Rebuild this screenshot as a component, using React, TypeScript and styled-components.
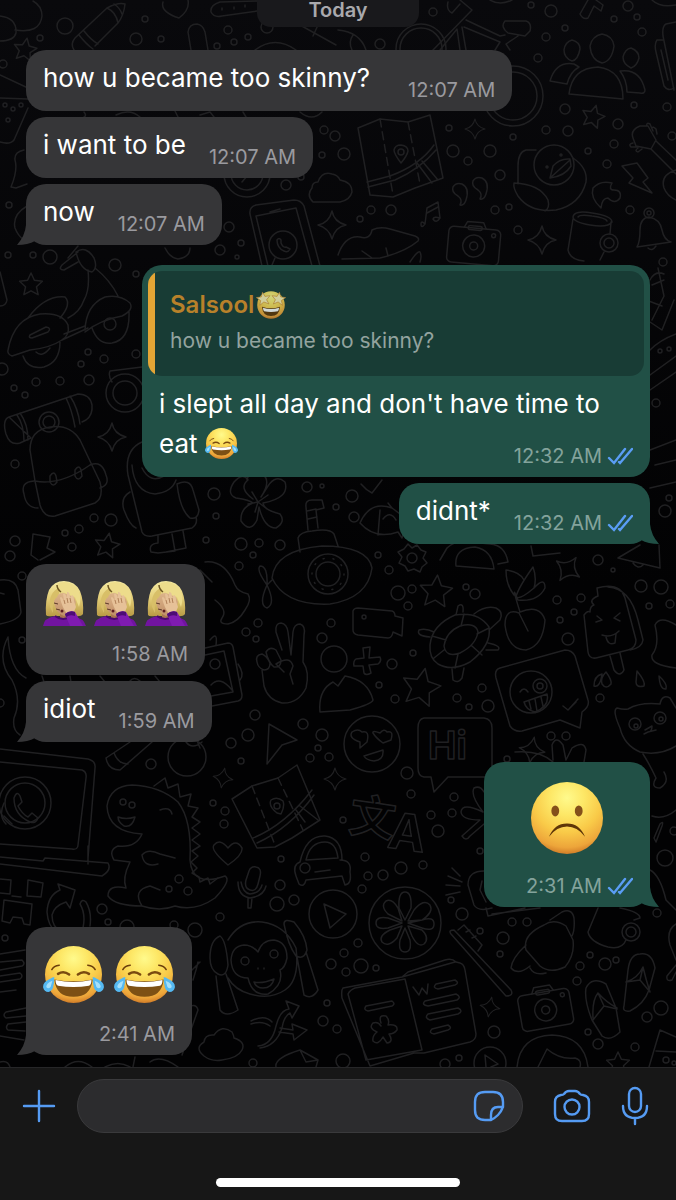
import React, { useId } from 'react';
import styled, { createGlobalStyle, css } from 'styled-components';

const GlobalStyle = createGlobalStyle`
  *, *::before, *::after { box-sizing: border-box; }
  body {
    margin: 0;
    background: #171717;
    font-family: Inter, "Liberation Sans", "Noto Sans CJK SC", sans-serif;
  }
`;

/* ---------- wallpaper ---------- */

const dots: number[][] = [
  [65,26,8],[145,19,3],[136,39,6],[161,39,3],[40,38,3],[228,30,4],[248,37,3],[234,42,3],[217,46,3],[3,64,4],[5,105,2],[13,109,2],
  [21,105,2],[8,120,2],[324,130,4],[335,136,5],[322,155,3],[286,185,5],[301,177,3],[9,205,3],[229,227,5],[220,250,5],[241,243,3],
  [8,255,3],[33,255,3],[50,257,7],[237,257,2],[267,27,6],[433,12,4],[380,44,5],[551,11,6],[531,5,3],[565,28,3],[546,37,4],
  [538,58,4],[628,6,5],[614,19,3],[637,17,3],[642,32,4],[565,109,5],[634,105,3],[667,107,4],[618,124,5],[546,130,4],[568,131,5],
  [513,137,3],[449,128,3],[453,151,6],[490,151,6],[468,161,4],[500,175,5],[344,154,6],[614,144,4],[588,151,3],[607,164,4],
  [630,210,4],[495,210,4],[509,207,3],[391,210,5],[371,210,4],[360,219,3],[518,230,4],[672,136,4],[115,265,6],[136,274,3],
  [88,352,3],[104,359,4],[136,354,4],[81,364,3],[60,381,4],[36,382,4],[89,380,5],[14,388,3],[25,395,3],[2,369,6],[15,464,4],
  [214,494,6],[216,516,3],[307,487,5],[322,486,2],[94,518,4],[111,520,6],[79,529,4],[65,533,3],[72,547,4],[15,541,5],[10,556,5],
  [206,540,3],[241,544,6],[259,543,4],[280,545,5],[253,555,3],[336,507,3],[663,262,4],[660,351,2],[669,349,2],[656,403,4],
  [352,496,6],[354,517,5],[669,498,3],[665,511,6],[378,555,3],[239,566,4],[22,576,4],[246,632,4],[258,623,4],[256,639,3],
  [322,638,5],[331,623,4],[22,640,3],[255,715,5],[248,735,6],[231,743,5],[241,761,3],[303,724,5],[322,735,6],[318,748,3],
  [310,758,4],[329,757,4],[151,764,5],[213,803,3],[225,811,4],[224,824,4],[0,703,4],[389,570,4],[398,593,7],[412,589,4],
  [408,606,4],[466,587,3],[475,594,5],[557,600,4],[581,598,4],[574,612,3],[560,620,3],[568,639,6],[413,653,3],[392,664,5],
  [379,685,3],[395,699,4],[482,688,4],[457,698,4],[469,707,3],[488,706,6],[598,560,5],[613,570,2],[641,586,6],[661,587,7],
  [649,606,3],[670,604,4],[600,698,4],[551,736,4],[566,736,4],[507,759,3],[407,773,6],[411,794,4],[454,797,4],[452,813,4],
  [431,815,4],[438,831,6],[343,820,3],[365,857,4],[368,876,4],[383,875,5],[401,868,6],[423,865,4],[362,889,4],[480,851,3],
  [451,900,3],[462,914,6],[665,858,8],[674,831,4],[102,909,5],[108,922,3],[127,927,7],[174,925,4],[195,930,7],[220,917,4],
  [277,904,7],[294,900,5],[280,885,5],[281,859,3],[5,938,3],[331,964,5],[327,1003,3],[323,1021,5],[337,1029,4],[253,1063,4],
  [179,879,4],[169,889,3],[188,891,4],[512,922,4],[527,922,4],[503,938,6],[500,954,3],[480,931,3],[590,955,3],[605,964,6],
  [616,960,3],[580,966,4],[577,981,4],[657,913,4],[358,943,4],[344,953,4],[361,966,7],[376,968,3],[346,972,4],[494,1032,6],
  [588,1032,3],[598,1044,5],[647,1017,5],[661,1008,7],[635,1047,4],[445,1064,5],[459,1058,3],[343,1061,7],
  // wheels, lenses, faces
  [421,49,25],[421,49,21],[513,96,30],[513,96,24],[401,152,3],[554,165,20],[561,155,1],[547,167,1],[609,243,9],[609,243,5],
  [649,213,5],[649,213,2],[283,245,14],[247,174,23],[247,174,16],[110,324,6],[125,393,19],[125,393,12],[49,422,10],[49,422,6],
  [328,574,20],[328,574,12],[334,659,13],[364,617,2],[531,692,21],[540,686,7],[540,686,3],[372,744,28],[635,724,6],[660,718,6],
  [636,726,2],[661,719,2],[25,803,26],[25,803,20],[123,802,3],[132,805,3],[187,757,19],[277,806,3],[305,868,5],[405,923,36],
  [333,914,24],[245,961,4],[274,954,4],[490,1063,16],[631,932,9],[631,932,5],[412,558,5],[215,664,5],[666,1060,3],[674,1063,2],
];

const sparkles: number[][] = [
  [475,129,10,0],[542,240,14,0],[112,437,14,0],[332,225,14,0],[223,778,10,10],[335,779,11,0],[568,569,14,35],[532,750,13,10],[490,1007,10,10],
];

const stars: number[][] = [
  [25,50,12,10],[31,285,12,0],[593,117,12,15],[107,546,13,10],[436,592,17,5],[421,688,20,12],[618,1064,12,0],
];

const doodles: string[] = [
  // clouds and pencil
  'M15 30Q40 34 42 16Q42 6 33 1M0 16Q17 18 16 33Q14 41 0 41',
  'M75 38L107 8Q118 2 125 4Q124 15 118 23L95 46M107 8Q116 12 118 23M79 35Q86 44 93 49M84 31Q91 40 98 44M75 38Q70 44 74 50M114 4Q120 8 122 14',
  'M163 2Q160 12 179 18Q190 10 188 0',
  'M257 1L220 2Q210 5 211 12Q214 18 222 16L257 11M222 8v2M234 7v2M245 5v2',
  'M191 50L188 32Q189 24 197 24Q203 25 205 32L208 50M255 50Q275 35 296 50',
  'M338 30Q360 32 366 50M353 35Q348 42 352 50M300 25L336 45M318 25L313 36',
  // bicycle
  'M433 50L472 10L460 0M440 50L457 29L460 50M462 27L466 50M466 20L500 36L505 35M464 27L500 42L495 50M448 2Q446 10 452 13L460 4M505 21L526 21Q532 23 530 31L525 36L508 33Q500 27 505 21ZM510 50L506 44L518 36',
  // group of people
  'M572 40Q580 42 580 49Q578 60 572 61Q564 58 564 50Q565 42 572 40ZM602 34Q613 36 614 46Q612 61 602 63Q591 60 590 46Q592 36 602 34ZM631 48Q639 51 639 58Q637 66 631 68Q623 64 623 57Q625 49 631 48Z',
  'M550 81Q556 61 574 64L579 67Q570 72 567 84ZM569 94Q572 68 598 67Q623 70 623 99ZM620 71Q640 68 645 90Q645 94 640 93L627 92Q627 80 620 71Z',
  'M676 22L666 24Q662 26 663 36L674 90M663 40L657 40Q654 44 656 52L664 86Q668 92 674 88M661 50L668 80M580 14Q583 20 588 18L594 6L601 11L603 5L596 0M580 14L588 0M490 0Q500 6 512 0M652 0Q660 8 676 5',
  // quotes and notes
  'M458 196Q451 192 453 187Q456 182 462 184Q470 188 466 200Q464 206 460 205Q463 200 458 196ZM478 190Q471 186 473 181Q476 176 482 178Q490 182 486 194Q484 200 480 199Q483 194 478 190Z',
  'M425 224L427 208L438 202L440 218Q436 224 433 219Q434 216 440 218M425 224Q421 229 421 224Q421 220 425 224M427 213L438 207',
  'M338 255Q345 235 360 237Q370 240 372 230Q380 226 390 229L415 236Q420 238 418 241Q405 252 380 258L342 259M362 251L372 258M386 248L388 256M410 262Q418 250 420 252Q422 256 420 262',
  // duck
  'M536 150L526 150Q518 152 518 166L518 184M573 158Q588 168 586 182Q580 205 556 210Q530 213 518 196Q513 188 514 183Q540 184 548 200Q550 208 545 211M570 159Q560 158 553 166L550 178Q565 176 571 166ZM550 178L570 160',
  'M601 208Q590 198 593 188Q600 180 612 183Q608 190 614 190Q622 190 620 198Q615 205 608 198Q602 198 601 208Z',
  'M622 166L637 163L648 178L643 182L652 193L629 183L633 178Z',
  'M633 138Q630 130 640 126L648 126L656 140L651 149L636 146ZM656 141L676 160M651 149L676 174M676 170Q660 175 664 188Q667 196 676 200M647 126Q646 122 650 124L653 131M652 128Q653 126 656 129L657 134M633 143Q628 144 631 147L637 147M638 148Q634 151 638 152L642 149',
  // mug and bell
  'M573 217Q574 210 592 213Q612 216 612 222Q608 228 590 225Q573 222 573 217ZM578 217Q580 214 592 216Q606 218 607 221M573 219L568 250Q570 260 584 261M611 222L610 234M604 252L600 260',
  'M637 247Q640 242 640 230Q640 218 649 217Q660 219 662 230Q664 240 671 242ZM648 248Q652 252 656 246',
  // phone
  'M262 266L250 214Q249 207 256 205L294 200Q301 200 304 206L320 266M268 266L256 216L296 208L312 266M270 212L280 209M275 258L272 265M277 240Q279 237 281 240L281 243Q283 248 286 247L290 249Q288 253 284 251Q277 248 277 240Z',
  'M313 202Q306 195 312 188Q312 182 318 182Q322 171 332 174Q338 175 340 180Q352 182 352 192Q350 200 340 202ZM242 182L254 168',
  'M0 75L28 88M0 98L28 99M28 108L14 140Q10 145 0 142M24 150Q14 152 15 160Q18 170 11 187L16 188L27 184M27 206Q12 215 15 228Q18 236 24 240M165 248Q170 258 178 259Q190 257 190 248M68 258L78 246',
  'M84 112Q87 116 84 117M116 115Q130 108 140 117M175 111L178 117M200 115L210 112L214 117M243 112L246 117M300 112Q312 122 322 112',
  // scooter
  'M8 350Q14 318 40 314Q62 312 68 325Q70 335 62 340Q50 348 30 350L12 356Q7 354 8 350ZM28 318Q45 295 65 297Q72 304 60 318M30 335L46 327Q52 328 48 332L32 338Q28 338 30 335ZM23 356Q28 370 44 367Q60 362 60 342M36 352Q42 358 50 348M62 340L88 328M64 334L85 326',
  'M85 330Q86 305 105 297Q120 294 130 303Q134 310 122 316Q100 320 85 332M92 328Q98 345 112 343Q130 340 129 312M88 270Q90 290 84 300Q80 312 68 318M95 268Q110 280 118 296M76 252Q86 245 94 258Q98 268 92 272Q80 270 76 252M78 252L62 265Q58 270 64 270L78 262M0 272L7 300Q6 306 0 306M142 367L110 371Q108 376 112 382',
  // backpack
  'M9 417L78 394Q90 394 92 405Q93 415 86 420L82 422M31 438L20 443Q10 446 6 434Q2 420 9 417ZM17 415Q24 425 24 441M20 413Q28 424 28 440M66 398Q72 410 75 427M70 396Q78 408 80 424',
  'M35 481L30 450Q30 430 50 427Q70 424 80 440L100 482Q104 498 95 503L55 516Q44 518 40 505ZM35 481Q60 486 90 465M34 481Q20 482 24 494Q26 508 38 508M90 465Q102 460 106 475Q110 485 100 488M50 476Q54 470 56 476L57 482Q53 488 50 482ZM75 470Q79 464 81 470L82 476Q78 482 75 476Z',
  // astronaut
  'M128 475Q124 450 142 442M132 465Q134 492 155 494Q172 492 176 480M128 475L142 532Q144 537 152 536L192 528Q198 524 196 517M177 484Q190 478 193 490L199 510Q198 520 190 518Q180 510 177 484M130 492Q120 498 124 510Q130 526 136 528M158 536L158 543Q148 544 151 552L158 553L175 551L172 534M183 531L186 548L166 552M142 468Q150 484 164 476',
  // flower
  'M253 499Q238 488 248 480Q243 472 234 482Q226 494 236 498Q250 500 253 503Q240 508 241 521Q250 534 257 520L259 507Q264 528 276 528Q286 522 280 514Q264 510 263 503Q290 498 285 482Q276 474 268 486L261 497Q272 480 262 474Q250 468 247 480M258 502L252 492M258 502L268 495M258 502L267 509M258 502L255 512M258 502L248 504',
  // submarine
  'M308 530L306 507Q305 500 312 500L322 500L324 508L316 510L318 528M307 511L316 509M308 519L317 517M300 552L298 538Q300 532 312 531Q330 528 334 534L338 546M272 578Q275 550 322 546Q368 546 372 568Q368 598 330 604Q285 606 272 578ZM267 585L272 580M267 585Q256 570 260 566Q268 566 267 585M267 585Q258 605 267 608Q276 604 267 585',
  'M33 534L50 537L47 548L55 552L40 560M33 534L31 555L38 560',
  // fish, hat, bell
  'M360 523Q370 500 392 508L388 503M360 523Q375 540 398 532L402 538L408 520L392 508M383 519Q390 510 396 520M380 510L378 535M361 484Q366 490 372 493L382 480M440 560L447 548Q455 540 470 542L490 544Q505 545 508 562L498 564M456 566Q454 548 475 547Q492 550 494 569ZM531 546L533 556L560 553M618 558Q628 552 640 545M618 558L660 568L659 545M633 563Q638 570 643 565',
  'M674 300L662 330L650 322M650 350Q660 340 676 334M650 375L676 356M650 390L676 372M650 450L676 440M655 465L676 460M652 320L664 296L658 268M652 285L664 280M650 488L676 482M646 300L662 306M650 280Q655 270 664 274',
  // gear
  'M404 549L408 544L412 548L417 545L421 550L426 552L423 558L427 563L422 567L420 572L414 569L408 571L405 566L399 563L402 557L398 552Z',
  // waves and portrait
  'M205 562Q225 560 235 585Q238 592 248 594Q252 600 245 610Q238 622 228 624Q218 624 222 618Q228 610 215 600M200 570L212 582',
  'M205 648L228 643Q232 643 233 647L242 695Q242 700 238 701L212 706M205 655L224 651L233 692L211 696M211 685Q220 675 232 690M210 640Q218 630 216 645M238 664Q245 674 240 680',
  'M0 580Q15 578 18 590L21 612Q20 620 0 624M0 593L4 594M8 637Q-4 660 12 680Q22 700 14 718Q12 730 20 735M8 637Q10 670 26 678M42 676L44 682M70 676L71 682M100 676L105 682M130 681Q134 676 140 681M155 676L160 682',
  // hand
  'M282 650L276 632Q275 623 281 623Q287 624 288 632L291 655L293 632Q294 624 300 624Q306 626 304 635L303 662Q310 672 306 688Q298 704 282 703Q268 700 264 686L262 670M257 662Q255 655 262 654Q267 656 270 663Q270 670 264 670Q258 668 257 662ZM266 652Q270 646 276 650L281 660Q281 668 274 667Q268 662 266 652M276 664Q290 655 293 666L290 674L293 684M276 664L284 672',
  'M269 724L297 740L282 745L267 764ZM320 712Q318 690 333 682L338 686L345 676Q368 680 373 700Q372 704 350 710Z',
  'M363 648L370 647L369 658L380 657Q382 661 378 664L369 665L371 673Q366 676 364 673L363 666L354 666Q353 661 356 659L364 658ZM353 611Q354 608 358 608L392 611Q395 612 395 616L403 618L402 636L393 632Q392 638 388 638L358 635Q353 634 353 630Z',
  // turtle
  'M430 645Q432 625 455 615Q478 611 489 627Q492 645 470 662Q452 672 438 664Q429 658 430 645ZM444 646Q446 632 460 626Q476 622 478 632Q476 645 460 653Q446 658 444 646ZM474 614Q485 605 496 608Q504 612 500 620L489 630M456 615L458 606Q464 602 463 612M430 637Q416 636 419 630Q426 628 434 632M488 643Q502 646 498 650L486 650M452 669L453 680Q458 684 462 678L464 668M461 626L464 614M477 634L489 628M472 646L482 655M458 654L455 668M444 650L434 658M446 640L432 636',
  // cherry plant
  'M519 613Q505 608 505 625Q508 650 526 650Q543 646 545 620Q540 604 520 612Q510 580 518 600M519 613L528 631M516 597Q518 588 533 567Q537 578 534 588Q520 600 516 597M514 595Q506 585 506 570Q520 572 524 580M534 588Q545 576 545 588Q538 602 518 600',
  // ice lolly
  'M597 588Q620 582 625 598L636 640Q636 648 628 650L596 658Q589 659 588 652L584 615Q588 610 590 612Q590 606 594 605Q588 600 598 596ZM608 587Q630 588 638 620L643 640Q642 648 630 650M610 656L614 670Q620 678 624 670L620 653M596 622L602 620L597 616M620 613L614 618L620 621M602 635Q612 638 619 631M606 637Q608 646 615 643L616 634',
  // reaction bubble
  'M500 668L565 650Q572 650 575 656L588 700Q590 706 582 712L580 728L560 720L522 731Q514 732 510 726L496 678Q494 670 500 668ZM520 692Q524 686 528 692M524 702L547 694Q550 706 535 712Q526 710 524 702M529 701L531 709M535 699L537 711M541 697L543 706M563 706L568 710L576 702M569 709L578 699',
  'M606 672Q612 680 611 684Q606 690 602 684Q600 678 606 672ZM602 674Q594 676 594 686Q600 688 602 674ZM637 671Q646 682 644 686Q636 688 636 682ZM659 676Q668 684 666 689Q660 690 659 676Z',
  // bubble around the greeting
  'M424 718L484 718Q492 719 492 728L492 777L448 777L434 792L431 777L424 777Q418 776 418 768L418 728Q418 719 424 718ZM360 742Q348 738 352 732Q358 728 362 732Q370 730 367 742L360 748ZM380 733Q384 728 387 732Q394 730 391 740L383 743Q376 738 373 733Q372 730 380 733ZM364 756L383 750Q384 760 374 761Q366 760 364 756Z',
  // bear
  'M620 728Q612 710 617 708Q624 710 628 709Q640 702 660 704Q662 694 670 698L676 708M620 728Q624 745 640 752Q660 756 676 746M645 730L652 726Q652 732 648 732L644 734M648 732L656 730M643 754Q650 765 656 778Q650 788 660 788Q670 782 664 772M655 625Q660 615 676 625M655 625Q660 645 652 655Q650 665 676 668M553 760L552 745Q556 735 563 745L566 760L572 748Q584 740 586 750L584 762M515 752Q540 750 553 762',
  // laptop
  'M0 749L88 759Q96 761 95 768L88 858M0 762L82 770Q87 772 86 778L78 845Q78 850 72 849L0 844M0 857L43 861L45 858L108 863Q112 870 102 876L0 864M88 846L88 864M4 803Q-2 816 6 824M12 824L4 816M14 798Q17 790 20 796L22 802L18 806Q22 814 28 817L32 813L38 818Q36 824 30 822Q14 815 14 798Z',
  // dinosaur
  'M107 806Q110 786 132 785Q160 786 178 802Q192 820 190 860Q192 888 225 876Q232 880 215 898Q195 912 175 906M107 806Q108 832 142 834Q136 848 118 846Q108 850 114 860L130 862Q122 878 126 888M142 855Q148 848 160 854L175 858M142 855Q144 868 158 864M126 888Q108 884 108 896Q115 906 142 906M175 906Q160 912 142 906Q132 890 150 886L160 890M118 817Q126 820 135 817Q132 828 124 826Q118 822 118 817ZM160 810Q170 806 172 814',
  'M154 786L165 778L168 788L178 784L180 797L191 794L188 806L198 808L192 817L200 822L192 828L200 834L192 840L200 846L192 851L198 856L191 862L197 868L192 873L199 877L200 882L208 878L210 884L218 878',
  'M106 758L130 742M120 770L152 742M106 758Q108 770 120 770M114 753Q118 764 128 764M186 742Q192 750 202 742M196 738L200 748',
  // folded map
  'M232 799L252 786L278 778L297 765L320 820L292 838L275 847L257 848ZM253 838Q285 825 312 790M257 843Q290 828 314 795M296 810L305 822M300 806L318 820M277 813Q268 806 271 800Q277 796 283 801Q285 806 281 814ZM228 865Q210 850 214 845Q220 838 228 848Q236 838 242 848Q243 855 228 865Z',
  'M300 862Q292 865 296 876L299 884Q304 888 306 880L342 876L345 885Q352 884 350 872Q352 860 340 860M300 862Q306 835 325 836Q342 838 342 860M306 860Q310 842 325 842Q336 842 338 858ZM315 872L330 870',
  // clover, droplets
  'M483 812Q470 795 474 788Q480 785 484 792M483 812Q462 802 461 812Q462 820 480 820L462 836Q466 842 470 836L484 824M452 868L460 876M448 876L462 882M446 885L460 886M446 895L460 892M486 871Q468 870 468 885L474 905Q478 912 492 908M482 881L480 890L486 902M650 870Q660 875 666 900L676 910M654 838L660 824Q664 820 662 826L656 842ZM652 816Q664 820 676 810',
  // orange slices
  'M405 920L399 908Q398 892 405 892Q412 892 411 908ZM408 921L414 910Q424 898 430 905Q434 912 422 920ZM408 923L422 920Q434 916 434 924Q434 932 422 928ZM408 926L422 930Q430 938 424 944Q418 948 412 936ZM405 928L410 940Q412 952 405 952Q398 952 400 940ZM402 926L397 938Q388 948 382 942Q378 936 390 930ZM402 923L388 928Q376 930 376 923Q376 916 388 918ZM402 921L388 914Q380 906 386 901Q392 898 398 908Z',
  // microphone, play, refresh
  'M256 867Q262 868 260 876L258 884Q256 892 250 890Q244 888 246 880L249 871Q251 866 256 867ZM238 882Q238 896 250 898Q264 896 266 886M241 882Q243 893 250 894Q260 893 262 885M248 898L248 908L251 908L252 898M324 904L346 914L330 928ZM60 890L58 884L75 890L70 908L66 902Q54 906 52 915Q52 928 62 932M60 890Q48 895 47 912Q48 926 56 932M80 904Q82 898 86 902Q92 912 90 926M80 904Q86 914 83 928M0 879L11 880L10 894L0 893M28 880L43 883L41 897L27 896ZM12 896L21 897M2 921L4 900L32 904L30 925L24 924L22 918L13 917L10 923Z',
  // monkey
  'M228 940Q240 920 262 922Q285 925 296 948Q300 980 285 990Q270 1000 250 994Q235 990 228 978M231 960Q232 946 244 945Q252 945 258 952Q262 940 274 940Q287 942 287 958Q285 968 280 970Q284 985 268 994Q252 996 248 978Q232 978 231 960ZM254 982Q262 984 274 979Q272 988 263 988Q256 988 254 982ZM210 958Q210 940 220 936Q226 940 228 965Q226 978 218 974Q210 970 210 958ZM216 976L220 1010Q226 1018 238 1010L226 974M284 924Q284 918 294 922Q306 936 307 950Q304 960 296 956Q288 945 284 924ZM297 957L304 995Q312 1000 318 990L306 952M258 968v1M264 968v1',
  // arrows and clouds
  'M258 1046Q272 1045 276 1026Q280 1010 289 1009L286 1001L299 1006L292 1018L290 1013Q284 1016 282 1028Q276 1046 260 1048M251 1021Q265 1014 272 1022M251 1024Q262 1020 270 1026M280 1028L293 1030L292 1024L307 1030L294 1040L293 1034L279 1032M204 1056Q194 1048 204 1042Q205 1034 214 1035Q222 1024 232 1032Q234 1036 234 1038Q246 1042 242 1050Q238 1058 222 1060Q212 1062 204 1056ZM276 1067Q274 1058 300 1050L318 1060L316 1067M300 1050L306 1062L318 1060M186 1008Q196 1002 198 1010L182 1055M193 980L196 970L198 962M190 972L200 962M135 1057L133 1067M150 1062Q160 1054 178 1067M0 1062Q8 1060 10 1067M65 1067Q78 1056 92 1067M105 1067Q118 1060 130 1067',
  'M0 954L25 950M0 962L22 960Q26 964 22 966L0 970M0 976L20 973Q24 976 20 979L0 982M0 992L16 990M26 1008L6 1012Q2 1015 6 1018L26 1016M26 1022L8 1024Q5 1028 8 1030L25 1031M0 1036L24 1040',
  // open book
  'M343 988L402 977L408 972L445 960Q452 958 456 962L460 963Q464 964 465 970L476 1034Q476 1040 470 1042L424 1053L414 1053L370 1066L342 998Q341 990 343 988ZM348 994Q350 990 355 988L405 979L422 1050M348 994L366 1060L422 1050M402 977L455 962M366 1006L392 1001Q396 1004 392 1006L368 1011Q363 1010 366 1006ZM436 984L455 980Q460 983 455 985L438 989Q432 988 436 984ZM425 1001L456 994Q462 997 457 1000L428 1006Q421 1005 425 1001ZM428 1014L458 1008Q464 1011 458 1014L430 1020Q424 1018 428 1014ZM432 1029L448 1025Q453 1028 448 1030L434 1034Q428 1033 432 1029ZM413 987L419 995L422 988L427 994L428 984',
  'M381 1023Q378 1014 386 1016Q390 1020 388 1025Q398 1024 397 1030Q394 1034 389 1034Q394 1042 387 1043L383 1037Q378 1046 373 1041Q372 1036 377 1032Q368 1028 373 1023Q378 1021 381 1026',
  // toothbrush, beehive
  'M451 934Q448 930 454 930L511 990Q514 996 506 996ZM458 930L464 925L482 945L478 951M466 932L470 930M472 938L476 936M544 925Q554 918 566 926L573 940Q575 955 565 967Q550 974 540 966L526 950Q522 935 544 925ZM550 920L562 912Q572 908 574 918Q575 930 572 936M526 945Q512 958 511 968Q518 976 530 966M530 968Q534 976 546 973',
  'M598 908L588 932Q590 942 608 947Q622 950 626 940M620 908Q640 912 640 918L634 920M486 908L488 916L525 908M540 908L492 914',
  // flip-flops
  'M592 1020L602 1036Q610 1042 620 1032L616 1008L606 984Q592 976 586 988Q584 1000 592 1020ZM593 1018Q592 1000 598 993Q606 1002 617 1008M593 1020L604 1006L617 1009M598 993L604 1006M624 1006Q622 1012 630 1011Q644 1004 649 990L655 968Q652 952 640 954Q630 954 628 970ZM626 982Q638 978 643 967Q646 980 650 992M626 982L640 980L650 992M643 967L640 980',
  'M517 1067Q520 1036 552 1035Q584 1036 588 1067M538 1067L547 1049Q560 1060 575 1058Q582 1060 580 1067M649 1067L660 1030L676 1037M656 1051L676 1052M676 924Q666 930 670 945L676 960M676 965L667 976Q666 982 672 980L676 972M485 1055L486 1067M485 1055L498 1064L491 1067',
];

const starPoints = (r: number) =>
  Array.from({ length: 10 }, (_, i) => {
    const a = -Math.PI / 2 + (i * Math.PI) / 5;
    const d = i % 2 ? r * 0.48 : r;
    return `${(Math.cos(a) * d).toFixed(1)},${(Math.sin(a) * d).toFixed(1)}`;
  }).join(' ');

const WallpaperSvg = styled.svg`
  position: absolute;
  inset: 0;
  width: 100%;
  height: 100%;
  stroke: #202022;
  stroke-width: 1.5;
  stroke-linecap: round;
  stroke-linejoin: round;
  fill: none;

  text { font-family: Inter, "Noto Sans CJK SC", sans-serif; font-weight: 700; }
`;

const CameraDoodle = ({ at }: { at: string }) => (
  <g transform={at}>
    <rect x="-26" y="-14" width="52" height="36" rx="5" />
    <path d="M-11 -14L-8 -20H8L11 -14" />
    <rect x="-7" y="-16" width="14" height="4" rx="2" />
    <circle cx="0" cy="4" r="11" />
    <circle cx="0" cy="4" r="4" />
    <circle cx="19" cy="-8" r="2" />
  </g>
);

const Wallpaper = () => (
  <WallpaperSvg viewBox="0 0 676 1067" preserveAspectRatio="xMidYMin slice" aria-hidden="true">
    {dots.map(([x, y, r], i) => <circle key={i} cx={x} cy={y} r={r} />)}
    {doodles.map((d, i) => <path key={i} d={d} />)}
    {sparkles.map(([x, y, r, a], i) => (
      <path
        key={i}
        transform={`translate(${x} ${y}) rotate(${a}) scale(${r / 14})`}
        d="M0-14Q2-3 14 0Q3 2 0 14Q-3 3-14 0Q-3-2 0-14Z"
      />
    ))}
    {stars.map(([x, y, r, a], i) => (
      <polygon key={i} points={starPoints(r)} transform={`translate(${x} ${y}) rotate(${a})`} />
    ))}
    <path d="M358 128L380 119L408 122L430 115L443 178L415 188L393 197L370 195ZM367 182L390 176Q420 165 434 145M368 187L395 180Q420 169 436 150M401 163Q394 154 394 150Q395 145 401 145Q408 146 408 151Q407 156 401 163ZM417 163L432 183M422 161L438 180" />
    <path strokeDasharray="8 5" d="M380 119L393 195M408 122L420 184M252 786L275 845M278 778L303 830" />
    <circle cx="328" cy="574" r="16" strokeDasharray="1 9" />
    <CameraDoodle at="translate(474 242) rotate(5)" />
    <CameraDoodle at="translate(545 1006) rotate(-10)" />
    <text x="428" y="759" fontSize="38">Hi</text>
    <text x="350" y="834" fontSize="46" transform="rotate(8 372 815)">文</text>
    <text x="389" y="850" fontSize="50" transform="rotate(8 408 830)">A</text>
  </WallpaperSvg>
);

/* ---------- emoji ---------- */

const Face = ({ id }: { id: string }) => (
  <>
    <defs>
      <radialGradient id={id} cx="50%" cy="22%" r="80%">
        <stop offset="0" stopColor="#fffa8c" />
        <stop offset="0.3" stopColor="#fde766" />
        <stop offset="0.6" stopColor="#f9ca48" />
        <stop offset="0.86" stopColor="#eda53a" />
        <stop offset="1" stopColor="#cb7424" />
      </radialGradient>
    </defs>
    <circle cx="50" cy="50" r="46" fill={`url(#${id})`} />
  </>
);

const Joy = ({ width, height }: { width: number; height: number }) => {
  const id = useId();
  return (
    <svg width={width} height={height} viewBox="1 4 98 92" role="img" aria-label="face with tears of joy">
      <Face id={id} />
      <path d="M15 42Q18 36 27 35M85 42Q82 36 73 35" stroke="#6d3f0c" strokeWidth="2.500" fill="none" strokeLinecap="round" />
      <path d="M25 49Q34 43 43 50M57 50Q66 43 75 49" stroke="#7a4a10" strokeWidth="4" fill="none" strokeLinecap="round" />
      <path d="M19 58Q50 64 81 58Q78 86 50 86Q22 86 19 58Z" fill="#7d5014" />
      <path d="M21 59Q50 65 79 59Q79 67 75 68Q50 72 25 68Q21 67 21 59Z" fill="#fff" />
      <path d="M19 54Q17 54 10 58Q0 63 1 71Q3 79 11 78Q19 76 19 54ZM81 54Q83 54 90 58Q100 63 99 71Q97 79 89 78Q81 76 81 54Z" fill="#55b9f2" />
      <path d="M16 60Q6 64 6 70Q9 74 13 70ZM84 60Q94 64 94 70Q91 74 87 70Z" fill="#a5e0fb" />
    </svg>
  );
};

const Frown = ({ size }: { size: number }) => {
  const id = useId();
  return (
    <svg width={size} height={size} viewBox="4 4 92 92" role="img" aria-label="frowning face">
      <Face id={id} />
      <ellipse cx="35" cy="41" rx="5" ry="7" fill="#84501a" />
      <ellipse cx="65" cy="41" rx="5" ry="7" fill="#84501a" />
      <path d="M27 74Q34 57 50 57Q66 57 73 74Q63 61 50 61Q37 61 27 74Z" fill="#5e3608" />
    </svg>
  );
};

const StarStruck = ({ size }: { size: number }) => {
  const id = useId();
  const star = 'M0-24L6-9L23-9L10 3L16 18L0 9L-15 18L-10 3L-23-9L-6-9Z';
  return (
    <svg width={size} height={size} viewBox="0 0 100 100" role="img" aria-label="star-struck face" opacity="0.8">
      <Face id={id} />
      <path transform="translate(25 31) rotate(-8)" d={star} fill="#fff3b5" stroke="#cf8a2a" strokeWidth="2" />
      <path transform="translate(75 31) rotate(8)" d={star} fill="#fff3b5" stroke="#cf8a2a" strokeWidth="2" />
      <path d="M20 56Q50 66 80 56Q78 87 50 87Q22 87 20 56Z" fill="#5e3608" />
      <path d="M23 59Q50 68 77 59Q76 68 73 71Q50 76 27 71Q24 68 23 59Z" fill="#fff" />
    </svg>
  );
};

const Facepalm = () => {
  const id = useId();
  return (
    <svg width="43" height="46" viewBox="0 0 43 46" role="img" aria-label="woman facepalming">
      <defs>
        <linearGradient id={`${id}h`} x1="0" y1="0" x2="0" y2="1">
          <stop offset="0" stopColor="#f5eaa2" />
          <stop offset="0.5" stopColor="#e2cc76" />
          <stop offset="1" stopColor="#b89a44" />
        </linearGradient>
        <linearGradient id={`${id}s`} x1="0" y1="0" x2="0" y2="1">
          <stop offset="0" stopColor="#dcb48a" />
          <stop offset="1" stopColor="#c08f68" />
        </linearGradient>
      </defs>
      <path d="M3 35Q2 20 6 10Q11 1 21 1Q32 1 37 11Q41 21 40 34Q38 37 31 36H10Q4 37 3 35Z" fill={`url(#${id}h)`} />
      <path d="M17 28H27V39H17Z" fill="#a9764f" />
      <path d="M11 21Q13 13 20 13Q32 14 33 22Q31 34 21 36Q12 33 11 21Z" fill={`url(#${id}s)`} />
      <path d="M7 27Q5 13 17 7Q17 15 12 19Q9 22 10 33Z" fill="#d8bf68" />
      <path d="M14 4Q15 12 32 17L36 27Q40 13 32 6Q23-1 14 4Z" fill="#eddc8b" />
      <path d="M14 5Q14 9 18 12" stroke="#6b5522" strokeWidth="1.500" fill="none" />
      <path d="M0 46Q1 38 12 36Q21 42 29 36Q41 38 43 46Z" fill="#7114a0" />
      <path d="M12 36Q20 42 29 36" stroke="#4a096e" strokeWidth="2" fill="none" />
      <path d="M24 34Q19 27 17 18Q18 15 21 21L20 14Q22 12 24 18L24 12Q27 11 27 18L29 15Q31 15 31 21L33 27L30 34Z" fill="#e6c198" />
      <path d="M21 20L22 24M24 18L25 23M27 18L28 23" stroke="#b08058" strokeWidth="1" />
      <path d="M11 23L15 24M13 29L17 30" stroke="#5c3927" strokeWidth="1" />
      <circle cx="19" cy="31" r="1.500" fill="#5c1d21" />
      <path d="M22 34Q26 30 32 32L40 46H27Z" fill="#7f1bb0" />
      <path d="M22 34Q27 30 32 32L32 36Q27 34 23 37Z" fill="#4d0c75" />
    </svg>
  );
};

/* ---------- chat ---------- */

const Page = styled.div`
  display: flex;
  flex-direction: column;
  min-height: 100vh;
`;

const Chat = styled.main`
  position: relative;
  flex: 1;
  overflow: hidden;
  background: linear-gradient(#09090c, #020203 55%);
`;

const Thread = styled.div`
  position: relative;
  display: flex;
  flex-direction: column;
  padding: 0 26px 12px;
`;

const DatePill = styled.h2`
  align-self: center;
  height: 27px;
  margin: 0 0 23px;
  padding: 0 51px;
  border-radius: 0 0 14px 14px;
  background: #19191c;
  color: #a9a9ad;
  font-size: 20px;
  font-weight: 600;
  line-height: 20px;
`;

const Messages = styled.ol`
  display: flex;
  flex-direction: column;
  gap: 20px;
  margin: 0;
  padding: 0;
  list-style: none;
`;

const Group = styled.li<{ $mine?: boolean }>`
  display: flex;
  flex-direction: column;
  align-items: ${(p) => (p.$mine ? 'flex-end' : 'flex-start')};
  gap: 6px;
`;

const bubbleColour = (mine?: boolean) => (mine ? '#215046' : '#363638');

const Bubble = styled.article<{ $mine?: boolean }>`
  position: relative;
  max-width: 508px;
  border-radius: 20px;
  background: ${(p) => bubbleColour(p.$mine)};
  color: #fff;
`;

const TextLine = styled.div<{ $gap?: number }>`
  display: flex;
  align-items: flex-end;
  gap: ${(p) => p.$gap ?? 23}px;
  padding: 8px 17px 9px;
`;

const TextBlock = styled.div`
  display: grid;
  padding: 8px 17px 9px;

  & > * { grid-area: 1 / 1; }
`;

const EmojiBlock = styled.div`
  display: flex;
  flex-direction: column;
  gap: 16px;
  padding: 16px 17px 9px;
`;

const EmojiRow = styled.div<{ $gap?: number; $pad?: string }>`
  display: flex;
  gap: ${(p) => p.$gap ?? 8}px;
  padding: ${(p) => p.$pad ?? '0'};

  svg { display: block; }
`;

const Text = styled.p`
  margin: 0 0 4px;
  font-size: 26px;
  line-height: 40px;

  svg { vertical-align: -6px; }
`;

const Stamp = styled.div<{ $mine?: boolean }>`
  display: flex;
  align-items: center;
  align-self: end;
  justify-self: end;
  gap: 5px;
  color: ${(p) => (p.$mine ? '#84a39c' : '#9a9a9f')};
  font-size: 20px;
  line-height: 24px;
  white-space: nowrap;
`;

const TailSvg = styled.svg<{ $mine?: boolean }>`
  position: absolute;
  bottom: 0;
  fill: ${(p) => bubbleColour(p.$mine)};
  ${(p) => (p.$mine
    ? css`right: -9px; transform: scaleX(-1);`
    : css`left: -9px;`)}
`;

const Tail = ({ mine }: { mine?: boolean }) => (
  <TailSvg $mine={mine} width="18" height="24" viewBox="0 0 18 24" aria-hidden="true">
    <path d="M9 0V4Q8 15 0 24Q11 24 18 20V0Z" />
  </TailSvg>
);

const Ticks = () => (
  <svg width="26" height="18" viewBox="0 0 26 18" fill="none" stroke="#5a9df5" strokeWidth="2.400" strokeLinecap="round" role="img" aria-label="Read">
    <path d="M2 11L7 16L18 2M12 15L13 16L25 2" />
  </svg>
);

const Meta = ({ time, mine }: { time: string; mine?: boolean }) => (
  <Stamp $mine={mine}>
    <time>{time}</time>
    {mine && <Ticks />}
  </Stamp>
);

const Quote = styled.blockquote`
  margin: 0 6px;
  padding: 18px 15px 20px 22px;
  border-radius: 14px;
  background: linear-gradient(90deg, #e3a535 7px, #183c35 7px);
`;

const BubbleTop = styled.div`
  padding-top: 6px;
`;

const QuoteName = styled.cite`
  display: flex;
  align-items: center;
  gap: 2px;
  color: #b8812a;
  font-size: 24px;
  font-style: normal;
  font-weight: 600;
  line-height: 32px;
`;

const QuoteText = styled.p`
  margin: 5px 0 0;
  color: #93a39f;
  font-size: 21px;
  line-height: 30px;
`;

/* ---------- composer ---------- */

const Footer = styled.footer`
  display: flex;
  flex-direction: column;
  gap: 45px;
  padding: 11px 0 13px;
  border-top: 1px solid #262628;
  background: #171717;
`;

const Composer = styled.form`
  display: flex;
  align-items: stretch;
  height: 54px;
  padding-right: 26px;
`;

const IconButton = styled.button<{ $width: number }>`
  display: flex;
  flex: none;
  align-items: center;
  justify-content: center;
  width: ${(p) => p.$width}px;
  padding: 0;
  border: 0;
  background: none;
  color: #559bf3;
  cursor: pointer;

  svg {
    display: block;
    fill: none;
    stroke: currentColor;
    stroke-width: 2.4;
    stroke-linecap: round;
    stroke-linejoin: round;
  }
`;

const Field = styled.div`
  display: flex;
  flex: 1;
  min-width: 0;
  border: 1px solid #3a3a3c;
  border-radius: 27px;
  background: #2c2c2e;
`;

const FieldInput = styled.input`
  flex: 1;
  min-width: 0;
  padding: 0 0 0 24px;
  border: 0;
  outline: 0;
  background: none;
  color: #fff;
  font: inherit;
  font-size: 26px;
`;

const HomeIndicator = styled.div`
  align-self: center;
  width: 36%;
  height: 9px;
  border-radius: 5px;
  background: #fff;
`;

const App = () => (
  <>
    <GlobalStyle />
    <Page>
      <Chat>
        <Wallpaper />
        <Thread>
          <DatePill>Today</DatePill>
          <Messages>
            <Group>
              <Bubble>
                <TextLine $gap={38}><Text>how u became too skinny?</Text><Meta time="12:07 AM" /></TextLine>
              </Bubble>
              <Bubble>
                <TextLine><Text>i want to be</Text><Meta time="12:07 AM" /></TextLine>
              </Bubble>
              <Bubble>
                <Tail />
                <TextLine><Text>now</Text><Meta time="12:07 AM" /></TextLine>
              </Bubble>
            </Group>
            <Group $mine>
              <Bubble $mine>
                <BubbleTop>
                  <Quote>
                    <QuoteName>Salsool<StarStruck size={30} /></QuoteName>
                    <QuoteText>how u became too skinny?</QuoteText>
                  </Quote>
                </BubbleTop>
                <TextBlock>
                  <Text>i slept all day and don't have time to eat <Joy width={33} height={31} /></Text>
                  <Meta time="12:32 AM" mine />
                </TextBlock>
              </Bubble>
              <Bubble $mine>
                <Tail mine />
                <TextLine><Text>didnt*</Text><Meta time="12:32 AM" mine /></TextLine>
              </Bubble>
            </Group>
            <Group>
              <Bubble>
                <EmojiBlock>
                  <EmojiRow><Facepalm /><Facepalm /><Facepalm /></EmojiRow>
                  <Meta time="1:58 AM" />
                </EmojiBlock>
              </Bubble>
              <Bubble>
                <Tail />
                <TextLine><Text>idiot</Text><Meta time="1:59 AM" /></TextLine>
              </Bubble>
            </Group>
            <Group $mine>
              <Bubble $mine>
                <Tail mine />
                <EmojiBlock>
                  <EmojiRow $pad="4px 30px"><Frown size={72} /></EmojiRow>
                  <Meta time="2:31 AM" mine />
                </EmojiBlock>
              </Bubble>
            </Group>
            <Group>
              <Bubble>
                <Tail />
                <EmojiBlock>
                  <EmojiRow $gap={10} $pad="3px 0"><Joy width={61} height={57} /><Joy width={61} height={57} /></EmojiRow>
                  <Meta time="2:41 AM" />
                </EmojiBlock>
              </Bubble>
            </Group>
          </Messages>
        </Thread>
      </Chat>
      <Footer>
        <Composer onSubmit={(e: React.FormEvent) => e.preventDefault()}>
          <IconButton type="button" $width={77} aria-label="Attach">
            <svg width="34" height="34" viewBox="0 0 34 34"><path d="M17 2V32M2 17H32" /></svg>
          </IconButton>
          <Field>
            <FieldInput type="text" aria-label="Message" />
            <IconButton type="button" $width={67} aria-label="Stickers">
              <svg width="32" height="32" viewBox="0 0 32 32">
                <path d="M18 30H12Q2 30 2 20V12Q2 2 12 2H20Q30 2 30 12V17Q28 22 25 25Q22 28 18 30ZM18 30V25Q18 17 25 17H30" />
              </svg>
            </IconButton>
          </Field>
          <IconButton type="button" $width={97} aria-label="Camera">
            <svg width="38" height="34" viewBox="0 0 38 34">
              <path d="M8 6Q10 6 11 5Q13 2 16 2H22Q25 2 27 5Q28 6 30 6Q36 7 36 13V25Q36 32 29 32H9Q2 32 2 25V13Q2 7 8 6Z" />
              <circle cx="19" cy="18" r="7.500" />
            </svg>
          </IconButton>
          <IconButton type="button" $width={30} aria-label="Voice message">
            <svg width="30" height="40" viewBox="0 0 30 40">
              <rect x="9" y="2" width="12" height="24" rx="6" />
              <path d="M3 20Q3 32 15 32Q27 32 27 20M15 32V38" />
            </svg>
          </IconButton>
        </Composer>
        <HomeIndicator />
      </Footer>
    </Page>
  </>
);

export default App;
